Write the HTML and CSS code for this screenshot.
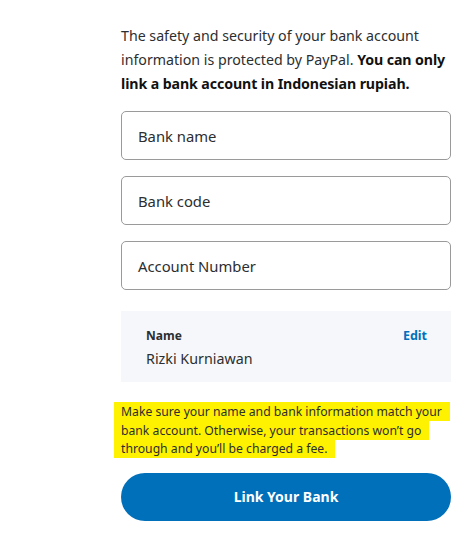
FILE: index.html
```html
<!DOCTYPE html>
<html>
<head>
<meta charset="utf-8">
<link rel="stylesheet" href="styles.css">
</head>
<body>
<div class="page">
  <p class="intro">The safety and security of your bank account information is protected by PayPal. <strong>You can only link a bank account in Indonesian rupiah.</strong></p>
  <div class="fields">
    <div class="field">Bank name</div>
    <div class="field">Bank code</div>
    <div class="field">Account Number</div>
  </div>
  <div class="namebox">
    <div class="namecol">
      <div class="label">Name</div>
      <div class="value">Rizki Kurniawan</div>
    </div>
    <a class="edit">Edit</a>
  </div>
  <p class="note"><span class="hl">Make sure your name and bank information match your bank account. Otherwise, your transactions won’t go through and you’ll be charged a fee.</span></p>
  <button class="btn">Link Your Bank</button>
</div>
</body>
</html>
```
FILE: styles.css
```css
html, body {
  margin: 0;
  padding: 0;
  background: #ffffff;
}
body {
  font-family: "Noto Sans", "Open Sans", sans-serif;
  color: #2c2e2f;
}
.page {
  width: 330px;
  margin-left: 121px;
  padding-top: 24px;
}
.intro {
  margin: 0;
  font-size: 14.2px;
  line-height: 24px;
  color: #2c2e2f;
}
.intro strong {
  font-weight: 700;
  color: #111;
  letter-spacing: -0.1px;
}
.fields {
  margin-top: 15px;
  display: flex;
  flex-direction: column;
  gap: 16px;
}
.field {
  height: 47px;
  border: 1px solid #9a9a9a;
  border-radius: 5px;
  display: flex;
  align-items: center;
  padding-left: 16px;
  font-size: 14.8px;
  color: #2c2e2f;
}
.namebox {
  margin-top: 21px;
  background: #f5f7fa;
  height: 71px;
  display: flex;
  justify-content: space-between;
  align-items: flex-start;
  padding: 16px 24px 0 25px;
  box-sizing: border-box;
}
.label {
  font-size: 12px;
  font-weight: 700;
  color: #2c2e2f;
  line-height: 18px;
}
.value {
  font-size: 14.3px;
  line-height: 20px;
  margin-top: 4px;
}
.edit {
  font-size: 12.5px;
  font-weight: 700;
  color: #0070ba;
  line-height: 18px;
}
.note {
  margin: 21px 0 0 0;
  font-size: 12.2px;
  line-height: 18.5px;
}
.hl {
  background: #fff200;
  padding: 1px 8px 1px 7px;
  margin-left: -7px;
  -webkit-box-decoration-break: clone;
  box-decoration-break: clone;
}
.btn {
  display: block;
  margin-top: 14px;
  width: 330px;
  height: 48px;
  border: none;
  border-radius: 24px;
  background: #0070ba;
  color: #fff;
  font-family: "Noto Sans", "Open Sans", sans-serif;
  font-size: 14px;
  font-weight: 700;
}
```
